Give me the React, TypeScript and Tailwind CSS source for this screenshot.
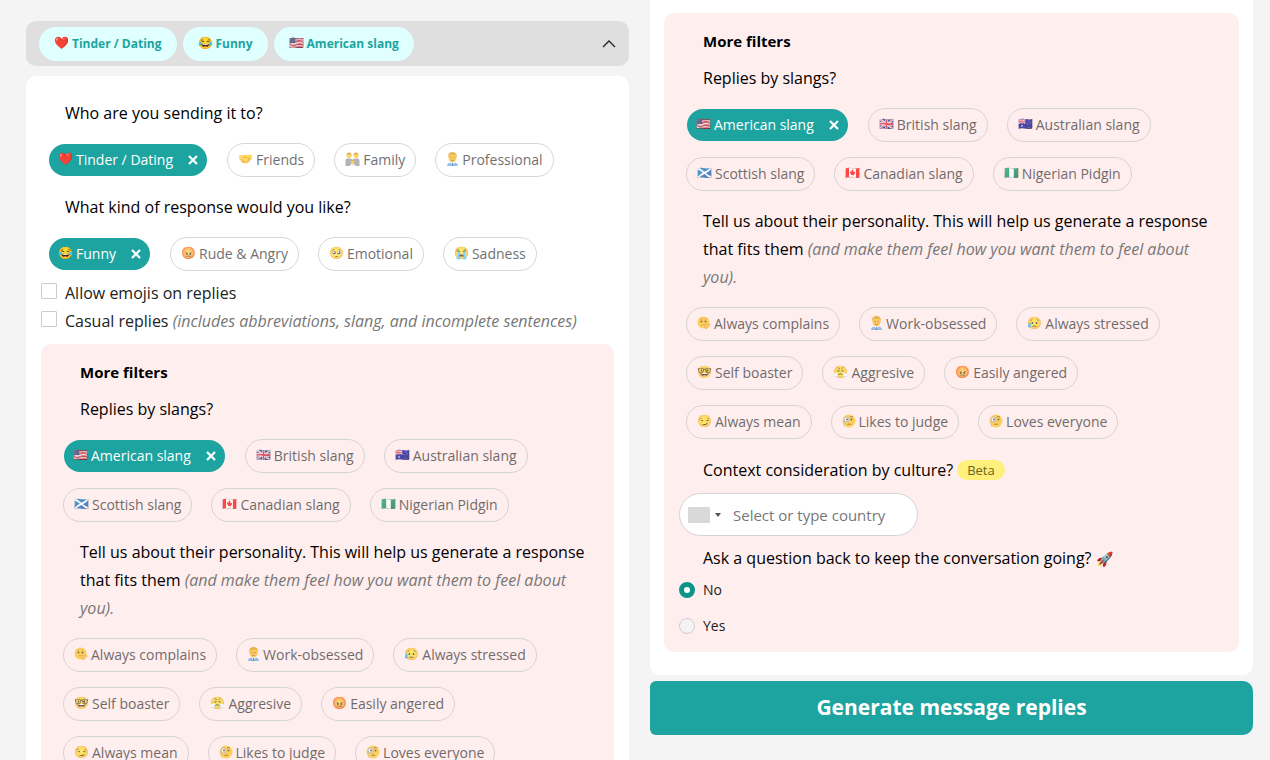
import { useState, type ReactNode } from 'react'

type Option = {
  label: string
  icon: ReactNode
}

function FamilyIcon() {
  return (
    <svg className="w-[15px] h-[14px]" viewBox="0 0 30 28" aria-hidden="true">
      <path d="M1 28V17q0-4 4-4h5q4 0 5 3 1-3 5-3h5q4 0 4 4v11z" fill="#8f949e" />
      <circle cx="8" cy="7" r="5" fill="#fcc521" />
      <circle cx="22" cy="7" r="5" fill="#fcc521" />
      <path d="M3 7q0-6 5-6t5 6q-2-3-5-3t-5 3zM17 7q0-6 5-6t5 6q-2-3-5-3t-5 3z" fill="#c98a0c" />
      <path d="M9 28q0-4 6-4t6 4z" fill="#e8edf2" />
      <circle cx="15" cy="20" r="4" fill="#fcc521" />
      <path d="M11 20q0-5 4-5t4 5q-2-2-4-2t-4 2z" fill="#c98a0c" />
    </svg>
  )
}

function WorkerIcon() {
  return (
    <svg className="w-[13px] h-[14px]" viewBox="0 0 26 28" aria-hidden="true">
      <path d="M2 28q0-6 7-7h8q7 1 7 7z" fill="#6aa6e3" />
      <path d="M8 20h10l-5 8z" fill="#eef4fb" />
      <path d="M12 22h2l1 6h-4z" fill="#2f6db5" />
      <ellipse cx="13" cy="11" rx="8" ry="10" fill="#fcb91f" />
      <path d="M4 12Q3 0 13 0t9 12q-1-6-4-7-5 1-10 0-3 1-4 7z" fill="#d99a0c" />
      <circle cx="10" cy="11" r="1" fill="#5b3a10" />
      <circle cx="16" cy="11" r="1" fill="#5b3a10" />
      <path d="M10 16q3 2 6 0" stroke="#9a5b12" strokeWidth="2" fill="none" />
    </svg>
  )
}

function DoubtIcon() {
  return (
    <svg className="w-[14px] h-[14px]" viewBox="0 0 28 28" aria-hidden="true">
      <circle cx="13" cy="13" r="12" fill="#fcc321" />
      <circle cx="9" cy="11" r="2" fill="#5b3a10" />
      <circle cx="17" cy="11" r="2" fill="#5b3a10" />
      <path d="M6 7q3-2 5-1M15 6q3-2 5 1M8 18l9-1" stroke="#a8651a" fill="none" />
      <path d="M17 16l8 0q3 1 1 3l-6 6q-4 1-5-2 0-3 2-7z" fill="#f9b52a" stroke="#e3921a" />
    </svg>
  )
}

function MonocleIcon() {
  return (
    <svg className="w-[14px] h-[14px]" viewBox="0 0 28 28" aria-hidden="true">
      <circle cx="14" cy="14" r="13" fill="#fcc321" />
      <circle cx="9" cy="11" r="5" fill="#fffbe8" stroke="#9a9fa8" strokeWidth="2" />
      <circle cx="10" cy="11" r="2" fill="#5b3a10" />
      <circle cx="19" cy="11" r="2" fill="#5b3a10" />
      <path d="M16 6q3-2 6 0M11 21q3-2 7 0" stroke="#8a4b10" strokeWidth="2" fill="none" />
      <path d="M4 13q-1 8 2 13" stroke="#9a9fa8" fill="none" />
    </svg>
  )
}

const recipients: Option[] = [
  { label: 'Tinder / Dating', icon: '❤️' },
  { label: 'Friends', icon: '🤝' },
  { label: 'Family', icon: <FamilyIcon /> },
  { label: 'Professional', icon: <WorkerIcon /> },
]

const tones: Option[] = [
  { label: 'Funny', icon: '😂' },
  { label: 'Rude & Angry', icon: '😡' },
  { label: 'Emotional', icon: '🥺' },
  { label: 'Sadness', icon: '😭' },
]

const slangs: Option[] = [
  { label: 'American slang', icon: '🇺🇸' },
  { label: 'British slang', icon: '🇬🇧' },
  { label: 'Australian slang', icon: '🇦🇺' },
  { label: 'Scottish slang', icon: '🏴󠁧󠁢󠁳󠁣󠁴󠁿' },
  { label: 'Canadian slang', icon: '🇨🇦' },
  { label: 'Nigerian Pidgin', icon: '🇳🇬' },
]

const personalities: Option[] = [
  { label: 'Always complains', icon: <DoubtIcon /> },
  { label: 'Work-obsessed', icon: <WorkerIcon /> },
  { label: 'Always stressed', icon: '😥' },
  { label: 'Self boaster', icon: '🤓' },
  { label: 'Aggresive', icon: '😤' },
  { label: 'Easily angered', icon: '😡' },
  { label: 'Always mean', icon: '😏' },
  { label: 'Likes to judge', icon: <MonocleIcon /> },
  { label: 'Loves everyone', icon: <MonocleIcon /> },
]

function Chip({ option, active, onClick }: { option: Option; active: boolean; onClick: () => void }) {
  return (
    <button
      type="button"
      aria-pressed={active}
      onClick={onClick}
      className={`h-[34px] flex items-center gap-[3px] rounded-full border text-sm whitespace-nowrap ${
        active
          ? 'px-[9px] bg-[#1da4a0] text-white border-transparent bg-clip-padding'
          : 'px-[10px] border-[#c4cac8] text-[#333] opacity-70'
      }`}
    >
      <span className="pb-[2px] text-xs leading-none">{option.icon}</span>
      <span>{option.label}</span>
      {active && (
        <svg className="w-[10px] h-[10px] ml-3" viewBox="0 0 10 10" aria-hidden="true">
          <path d="M1 1l8 8M9 1l-8 8" stroke="currentColor" strokeWidth="2.2" fill="none" />
        </svg>
      )}
    </button>
  )
}

function ChipGroup({ options, initial }: { options: Option[]; initial?: string }) {
  const [selected, setSelected] = useState(initial)

  return (
    <div className="flex flex-wrap gap-x-[19px] gap-y-[15px] max-w-[520px]">
      {options.map((option) => (
        <Chip
          key={option.label}
          option={option}
          active={option.label === selected}
          onClick={() => setSelected(option.label === selected ? undefined : option.label)}
        />
      ))}
    </div>
  )
}

function MoreFilters({ children }: { children?: ReactNode }) {
  return (
    <section className="bg-[#ffeeee] rounded-[10px] px-[15px] pt-[14px] pb-4 leading-7 text-black">
      <h2 className="pl-6 text-[15px] leading-7 font-bold">More filters</h2>
      <p className="pl-6 mt-[9px]">Replies by slangs?</p>
      <div className="pl-[7px] mt-4">
        <ChipGroup options={slangs} initial="American slang" />
      </div>
      <p className="pl-6 mt-4 max-w-[538px]">
        Tell us about their personality. This will help us generate a response that fits them{' '}
        <em className="text-[#777]">(and make them feel how you want them to feel about you).</em>
      </p>
      <div className="pl-[7px] mt-4">
        <ChipGroup options={personalities} />
      </div>
      {children}
    </section>
  )
}

function Checkbox({ id, children }: { id: string; children: ReactNode }) {
  return (
    <div className="flex items-center gap-2 leading-7">
      <input
        id={id}
        type="checkbox"
        className="appearance-none shrink-0 w-4 h-4 mb-1 bg-white border border-[#ccc] rounded-[1px] checked:bg-[#1da4a0]"
      />
      <label htmlFor={id} className="text-[#222]">{children}</label>
    </div>
  )
}

function FollowUp() {
  const [answer, setAnswer] = useState('No')

  return (
    <fieldset className="mt-2">
      <legend className="pl-6">
        Ask a question back to keep the conversation going? <span className="text-sm">🚀</span>
      </legend>
      <div className="flex flex-col gap-4 mt-2">
        {['No', 'Yes'].map((value) => (
          <div key={value} className="flex items-center gap-2">
            <input
              id={`follow-up-${value}`}
              type="radio"
              name="follow-up"
              checked={answer === value}
              onChange={() => setAnswer(value)}
              className="appearance-none w-4 h-4 rounded-full bg-[#f4f4f4] border border-[#ccc] checked:bg-white checked:border-5 checked:border-[#0d9488]"
            />
            <label htmlFor={`follow-up-${value}`} className="text-sm text-[#222]">{value}</label>
          </div>
        ))}
      </div>
    </fieldset>
  )
}

function Summary() {
  return (
    <div className="h-[45px] flex items-center gap-[6px] px-[13px] rounded-[10px] bg-[#dfdfdf]">
      {[recipients[0], tones[0], slangs[0]].map((option) => (
        <span
          key={option.label}
          className="h-[34px] flex items-center gap-[3px] px-[15px] rounded-full bg-[#e0ffff] text-[#1da4a0] text-xs font-bold whitespace-nowrap"
        >
          <span className="pb-[2px] text-xs leading-none">{option.icon}</span>
          {option.label}
        </span>
      ))}
      <button type="button" aria-label="Collapse filters" className="ml-auto text-[#222]">
        <svg className="w-[14px] h-[8px]" viewBox="0 0 14 8" fill="none" aria-hidden="true">
          <path d="M1 7l6-6 6 6" stroke="currentColor" strokeWidth="1.3" />
        </svg>
      </button>
    </div>
  )
}

export default function App() {
  return (
    <div className="h-screen overflow-hidden flex gap-[21px] pl-[26px] pr-[17px] bg-[#f4f4f4] font-['Open_Sans',sans-serif] text-base text-black">
      {/* Top of the form */}
      <div className="flex-1 min-w-0 pt-[21px]">
        <Summary />
        <div className="mt-[10px] px-[15px] pt-[23px] bg-white rounded-[10px]">
          <p className="pl-6 leading-7">Who are you sending it to?</p>
          <div className="pl-[7px] mt-4">
            <ChipGroup options={recipients} initial="Tinder / Dating" />
          </div>
          <p className="pl-6 mt-4 leading-7">What kind of response would you like?</p>
          <div className="pl-[7px] mt-4 mb-2">
            <ChipGroup options={tones} initial="Funny" />
          </div>
          <Checkbox id="emojis">Allow emojis on replies</Checkbox>
          <Checkbox id="casual">
            Casual replies{' '}
            <em className="text-[#777]">(includes abbreviations, slang, and incomplete sentences)</em>
          </Checkbox>
          <div className="mt-[9px]">
            <MoreFilters />
          </div>
        </div>
      </div>

      {/* Rest of the form */}
      <div className="flex-1 min-w-0">
        <div className="px-[14px] pt-[13px] pb-[23px] bg-white rounded-b-[10px]">
          <MoreFilters>
            <label htmlFor="country" className="pl-6 mt-[17px] flex items-center gap-1">
              Context consideration by culture?
              <span className="px-[10px] leading-5 rounded-full bg-[#fff07c] text-[13px] text-[#6b6420]">Beta</span>
            </label>
            <div className="mt-[9px] w-[239px] h-[43px] flex items-center pl-2 bg-white border border-[#d4d4d4] rounded-full">
              <button type="button" aria-label="Country list" className="flex items-center gap-[5px]">
                <span className="w-[22px] h-4 bg-[#d9d9d9]" />
                <svg className="w-[6px] h-1" viewBox="0 0 6 4" aria-hidden="true">
                  <path d="M0 0h6L3 4z" fill="#555" />
                </svg>
              </button>
              <input
                id="country"
                type="text"
                placeholder="Select or type country"
                className="ml-3 flex-1 min-w-0 bg-transparent outline-none text-[15px] placeholder:text-[#777]"
              />
            </div>
            <FollowUp />
          </MoreFilters>
        </div>
        <button
          type="button"
          className="mt-[6px] w-full h-[54px] rounded-r-[10px] rounded-l-md bg-[#1da4a0] text-white text-[21px] font-bold"
        >
          Generate message replies
        </button>
      </div>
    </div>
  )
}
